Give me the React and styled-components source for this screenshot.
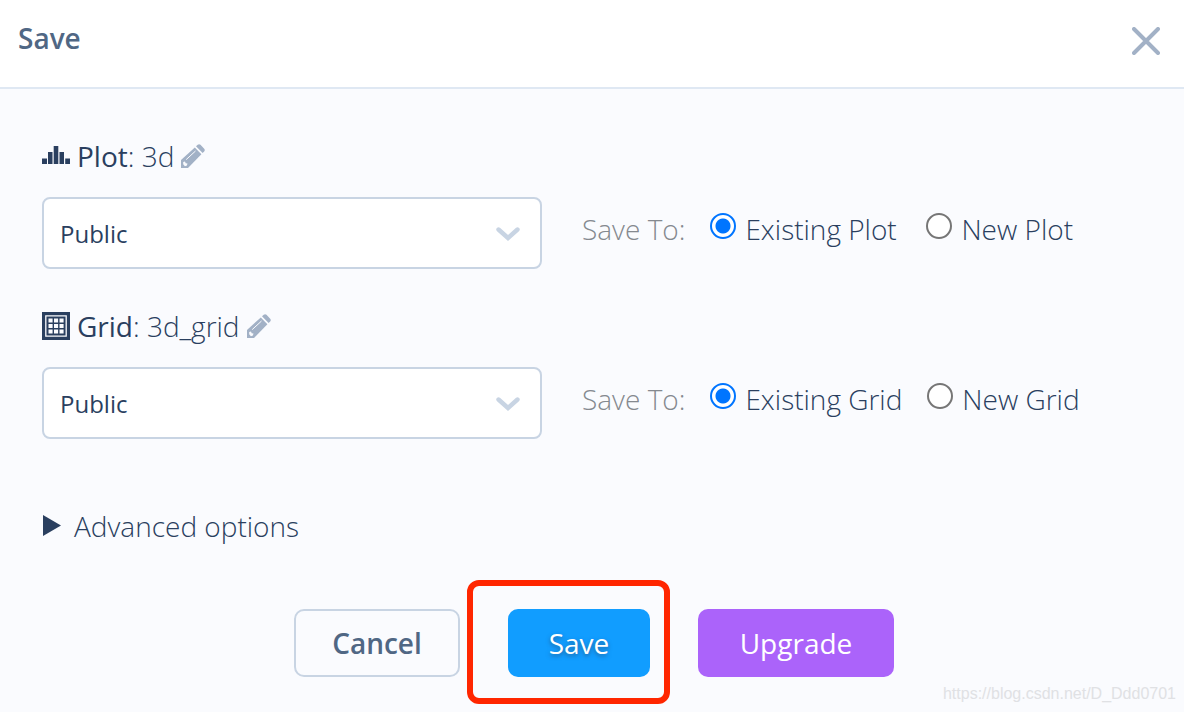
import React, { useState } from "react";
import styled, { createGlobalStyle, css } from "styled-components";

const GlobalStyle = createGlobalStyle`
  *, *::before, *::after { box-sizing: border-box; }
  body {
    margin: 0;
    min-height: 100vh;
    background: #fafbfe;
    color: #2a3f5f;
    font-family: "Open Sans", "Noto Sans", sans-serif;
    font-size: 28px;
    font-weight: 300;
    line-height: 40px;
  }
  button, select, input { font-family: inherit; }
`;

const Dialog = styled.main`
  display: flex;
  flex-direction: column;
  min-height: 100vh;
  position: relative;
`;

const Header = styled.header`
  display: flex;
  align-items: flex-start;
  justify-content: space-between;
  padding: 18px 18px 26px;
  background: #fff;
  border-bottom: 2px solid #dfe8f3;
`;

const Title = styled.h1`
  margin: 0;
  color: #506784;
  font-size: 28px;
  font-weight: 600;
  line-height: 40px;
`;

const IconButton = styled.button`
  display: inline-flex;
  align-items: center;
  justify-content: center;
  padding: 0;
  border: 0;
  background: none;
  color: #a2b1c6;
  cursor: pointer;
`;

const CloseButton = styled(IconButton)`
  width: 40px;
  height: 40px;
  margin-top: 3px;
`;

const Form = styled.form`
  display: flex;
  flex-direction: column;
  padding: 47px 42px 35px;
`;

const FileSection = styled.section`
  display: flex;
  flex-direction: column;
  gap: 21px;
  margin-bottom: 37px;
`;

const FileHeading = styled.div`
  display: flex;
  align-items: center;
  gap: 7px;
`;

const FileName = styled.span`
  white-space: pre;
`;

const FileKind = styled.span`
  font-weight: 500;
`;

const FileControls = styled.div`
  display: flex;
  align-items: center;
  gap: 40px;
`;

const SelectFrame = styled.div`
  position: relative;
  flex: 0 1 500px;
`;

const Select = styled.select`
  appearance: none;
  display: block;
  width: 100%;
  height: 72px;
  padding: 0 48px 0 16px;
  border: 2px solid #c8d4e3;
  border-radius: 8px;
  background: #fff;
  color: #2a3f5f;
  font-size: 24px;
  font-weight: 400;
`;

const SelectArrow = styled.svg`
  position: absolute;
  top: 29px;
  right: 22px;
  pointer-events: none;
`;

const Targets = styled.fieldset`
  display: flex;
  align-items: center;
  gap: 25px;
  min-width: 0;
  margin: 0;
  padding: 0 0 8px;
  border: 0;
`;

const TargetsLabel = styled.span`
  color: #85898f;
`;

const RadioLabel = styled.label`
  display: flex;
  align-items: center;
  gap: 9px;
  min-width: 191px;
  white-space: nowrap;

  &:last-child {
    min-width: 0;
  }
`;

const Radio = styled.input`
  appearance: none;
  width: 26px;
  height: 26px;
  margin: 0 0 6px;
  border: 2px solid #767676;
  border-radius: 50%;
  background: #fff;

  &:checked {
    border-color: #0075ff;
    background: radial-gradient(circle, #0075ff 7px, #fff 8px);
  }
`;

const Advanced = styled.button`
  display: flex;
  align-items: center;
  align-self: flex-start;
  gap: 13px;
  margin-top: 30px;
  padding: 0;
  border: 0;
  background: none;
  color: inherit;
  font-size: 28px;
  font-weight: 300;
  line-height: 40px;
`;

const Actions = styled.div`
  display: flex;
  justify-content: center;
  gap: 48px;
  margin-top: 63px;
  padding-left: 4px;
`;

const variants = {
  plain: css`
    width: 166px;
    border: 2px solid #c8d4e3;
    background: transparent;
    color: #506784;
    font-weight: 600;
  `,
  primary: css`
    width: 142px;
    background: #119dff;
    text-shadow: 0 2px 4px rgba(42, 63, 95, 0.6);
  `,
  upgrade: css`
    width: 196px;
    background: #ab63fa;
  `,
};

const Button = styled.button`
  display: block;
  height: 68px;
  padding: 0;
  border: 0;
  border-radius: 10px;
  color: #fff;
  font-size: 28px;
  font-weight: 500;
  line-height: 40px;
  ${({ $variant }) => variants[$variant]}
`;

const Highlighted = styled.div`
  position: relative;

  &::after {
    content: "";
    position: absolute;
    inset: -29px -20px -27px -41px;
    border: 6px solid #ff2600;
    border-radius: 12px;
    pointer-events: none;
  }
`;

const Watermark = styled.span`
  position: absolute;
  right: 8px;
  bottom: 8px;
  color: #e0e1e4;
  font-family: "Liberation Sans", Arial, sans-serif;
  font-size: 16px;
  font-weight: 400;
  line-height: 20px;
`;

function PlotIcon() {
  return (
    <svg width="28" height="28" viewBox="0 0 28 28" fill="#2a3f5f" aria-hidden="true">
      <path d="M0 16.5h5V22H0zM6 10h4.5v12H6zM11.7 4h4.6v18h-4.6zM17.5 10H22v12h-4.5zM23.2 16.5H28V22h-4.8z" />
    </svg>
  );
}

function GridIcon() {
  return (
    <svg width="28" height="28" viewBox="0 0 28 28" aria-hidden="true">
      <path fill="#2a3f5f" d="M0 0h28v28H0z" />
      <path fill="none" stroke="#fafbfe" strokeWidth="1.3" d="M3.8 3.8h20.4v20.4H3.8z" />
      <path
        fill="#fafbfe"
        d="M6.5 6.5h4.1v4.1H6.5zM12 6.5h4.1v4.1H12zM17.5 6.5h4.1v4.1h-4.1zM6.5 12h4.1v4.1H6.5zM12 12h4.1v4.1H12zM17.5 12h4.1v4.1h-4.1zM6.5 17.5h4.1v4.1H6.5zM12 17.5h4.1v4.1H12zM17.5 17.5h4.1v4.1h-4.1z"
      />
    </svg>
  );
}

function PencilIcon() {
  return (
    <svg width="24" height="24" viewBox="0 0 24 24" aria-hidden="true">
      <path fill="currentColor" d="M0 24v-8L13.8 3.4l6.6 6.8L7 24z" />
      <path fill="currentColor" d="m15 2.3 1.7-1.5q1.4-1.3 2.8 0l3.7 3.9q1.2 1.4 0 2.8l-1.6 1.6z" />
      <path fill="none" stroke="#fafbfe" strokeWidth="1" d="M5.2 15.6 14.5 7" />
      <path fill="#fafbfe" d="m2.2 18 1.8-.6.7 1.8 1.8.4-.6 2-2 .6-1.7-2z" />
    </svg>
  );
}

function FileBlock({ kind, name, icon }) {
  const [target, setTarget] = useState("existing");
  return (
    <FileSection>
      <FileHeading>
        {icon}
        <FileName>
          <FileKind>{kind}</FileKind>: {name}
        </FileName>
        <IconButton type="button" aria-label={`Rename ${name}`}>
          <PencilIcon />
        </IconButton>
      </FileHeading>
      <FileControls>
        <SelectFrame>
          <Select aria-label={`${kind} privacy`} defaultValue="Public">
            <option>Public</option>
          </Select>
          <SelectArrow width="24" height="16" viewBox="0 0 24 16" aria-hidden="true">
            <path d="m2.5 3.5 9.5 8.5 9.5-8.5" fill="none" stroke="#c8d4e3" strokeWidth="4.4" strokeLinecap="round" />
          </SelectArrow>
        </SelectFrame>
        <Targets aria-label={`Save ${kind} to`}>
          <TargetsLabel>Save To:</TargetsLabel>
          <RadioLabel>
            <Radio
              type="radio"
              name={`${kind}-target`}
              checked={target === "existing"}
              onChange={() => setTarget("existing")}
            />
            Existing {kind}
          </RadioLabel>
          <RadioLabel>
            <Radio
              type="radio"
              name={`${kind}-target`}
              checked={target === "new"}
              onChange={() => setTarget("new")}
            />
            New {kind}
          </RadioLabel>
        </Targets>
      </FileControls>
    </FileSection>
  );
}

export default function App() {
  return (
    <>
      <GlobalStyle />
      <Dialog>
        <Header>
          <Title>Save</Title>
          <CloseButton type="button" aria-label="Close">
            <svg width="28" height="28" viewBox="0 0 28 28" aria-hidden="true">
              <path d="m2 2 24 24M26 2 2 26" stroke="currentColor" strokeWidth="4" strokeLinecap="round" />
            </svg>
          </CloseButton>
        </Header>
        <Form onSubmit={(event) => event.preventDefault()}>
          <FileBlock kind="Plot" name="3d" icon={<PlotIcon />} />
          <FileBlock kind="Grid" name="3d_grid" icon={<GridIcon />} />
          <Advanced type="button" aria-expanded="false">
            <svg width="19" height="22" viewBox="0 0 19 22" aria-hidden="true">
              <path d="M1 0v21l18-10.5z" fill="#2a3f5f" />
            </svg>
            Advanced options
          </Advanced>
          <Actions>
            <Button type="button" $variant="plain">Cancel</Button>
            <Highlighted>
              <Button type="submit" $variant="primary">Save</Button>
            </Highlighted>
            <Button type="button" $variant="upgrade">Upgrade</Button>
          </Actions>
        </Form>
        <Watermark>https://blog.csdn.net/D_Ddd0701</Watermark>
      </Dialog>
    </>
  );
}
